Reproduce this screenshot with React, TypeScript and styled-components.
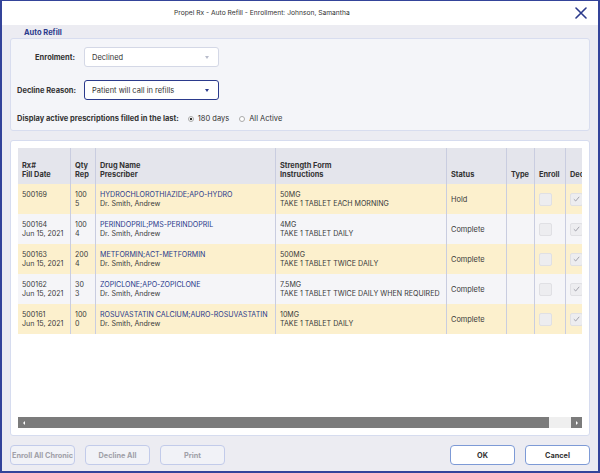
import React from "react";
import styled, { createGlobalStyle } from "styled-components";

const Global = createGlobalStyle`
  html, body { margin: 0; padding: 0; background: #ffffff; }
  * { box-sizing: border-box; }
  body { font-family: Inter, "Noto Sans", sans-serif; color: #3a3a3a; }
`;

const Window = styled.div`
  width: 600px;
  height: 473px;
  border: 2px solid #34449a;
  border-top-width: 1px;
  display: flex;
  flex-direction: column;
  background: #ececf2;
`;

const TitleBar = styled.div`
  height: 24px;
  flex: none;
  background: #ffffff;
  display: flex;
  align-items: center;
  padding-left: 172px;
  font-size: 6.7px;
  color: #333;
`;

const Title = styled.div`
  flex: 1;
`;

const Close = styled.div`
  margin-right: 11px;
  display: flex;
`;

const Body = styled.div`
  flex: 1;
  display: flex;
  flex-direction: column;
  padding: 4px 8px 5px 8px;
`;

const Legend = styled.div`
  font-size: 7.5px;
  font-weight: 700;
  color: #2b3a8c;
  padding-left: 14px;
  height: 8px;
  line-height: 8px;
`;

const Fieldset = styled.div`
  margin-top: 1px;
  border: 1px solid #d8ddef;
  border-radius: 3px;
  background: #f4f5f9;
  padding: 8px 6px 8px 6px;
  display: flex;
  flex-direction: column;
  gap: 13px;
  height: 93px;
`;

const FieldRow = styled.div`
  display: grid;
  grid-template-columns: 58px 135px;
  column-gap: 9px;
  align-items: center;
`;

const Label = styled.div`
  font-size: 7.5px;
  font-weight: 700;
  color: #333;
  text-align: right;
  white-space: nowrap;
`;

const Select = styled.div<{ $active?: boolean }>`
  height: 20px;
  border: 1px solid ${(p) => (p.$active ? "#2b3a8c" : "#d4d8e6")};
  border-radius: 3px;
  background: #ffffff;
  display: flex;
  align-items: center;
  justify-content: space-between;
  padding: 0 9px 0 7px;
  font-size: 7.5px;
  color: #333;
`;

const Caret = styled.span<{ $active?: boolean }>`
  width: 0;
  height: 0;
  border-left: 2.5px solid transparent;
  border-right: 2.5px solid transparent;
  border-top: 3px solid ${(p) => (p.$active ? "#2b3a8c" : "#b8bccb")};
`;

const RadioRow = styled.div`
  display: flex;
  align-items: center;
  font-size: 7.5px;
  color: #333;
  margin-top: 1px;
`;

const RadioLabel = styled.span`
  font-weight: 700;
  margin-right: 9px;
`;

const RadioItem = styled.span`
  display: inline-flex;
  align-items: center;
  gap: 4px;
  margin-right: 10px;
`;

const RadioDot = styled.span<{ $on?: boolean }>`
  width: 6px;
  height: 6px;
  border-radius: 50%;
  border: 1px solid #aaa;
  background: ${(p) => (p.$on ? "radial-gradient(circle, #333 0 1.3px, #fff 1.6px)" : "#fff")};
`;

const TablePanel = styled.div`
  margin-top: 9px;
  height: 296px;
  border: 1px solid #d6dcef;
  border-radius: 3px;
  background: #ffffff;
  padding: 7px 7px 4px 7px;
  display: flex;
  flex-direction: column;
`;

const TableClip = styled.div`
  flex: 1;
  overflow: hidden;
`;

const Table = styled.div`
  width: 600px;
`;

const cols = "52px 25px 180px 171px 60px 28px 31px 30px";

const HeadRow = styled.div`
  display: grid;
  grid-template-columns: ${cols};
  height: 36px;
  background: #e4e5ec;
`;

const HeadCell = styled.div`
  display: flex;
  flex-direction: column;
  justify-content: flex-end;
  padding: 0 4px 5px 4px;
  font-size: 7.4px;
  font-weight: 700;
  line-height: 9px;
  color: #333;
  border-left: 1px solid #c9cde0;
  white-space: nowrap;
  overflow: hidden;
  &:first-child { border-left: none; }
`;

const Row = styled.div<{ $alt?: boolean }>`
  display: grid;
  grid-template-columns: ${cols};
  height: 30px;
  background: ${(p) => (p.$alt ? "#f5f5f8" : "#fcf0cd")};
`;

const Cell = styled.div<{ $blue?: boolean }>`
  display: flex;
  flex-direction: column;
  justify-content: flex-start;
  padding: 6px 4px 0 4px;
  font-size: 7.1px;
  line-height: 9px;
  color: ${(p) => (p.$blue ? "#2b3a8c" : "#3a3a3a")};
  border-left: 1px solid #c9cde0;
  white-space: nowrap;
  overflow: hidden;
  &:first-child { border-left: none; }
`;

const Prescriber = styled.span`
  color: #3a3a3a;
`;

const CenterCell = styled(Cell)`
  justify-content: center;
  padding-top: 0;
  font-size: 7.4px;
`;

const Check = styled.span`
  width: 13px;
  height: 13px;
  border: 1px solid #e0e0e4;
  border-radius: 2px;
  background: #ededf0;
  display: flex;
  align-items: center;
  justify-content: center;
`;

const Scrollbar = styled.div`
  height: 11px;
  flex: none;
  display: flex;
  background: #efefef;
  margin-bottom: 3px;
`;

const Thumb = styled.div`
  width: 531px;
  background: #7b7b7b;
  display: flex;
  align-items: center;
  padding-left: 5px;
`;

const Track = styled.div`
  flex: 1;
`;

const ArrowBtn = styled.div`
  width: 11px;
  background: #7b7b7b;
  display: flex;
  align-items: center;
  justify-content: center;
`;

const Tri = styled.span<{ $dir: "l" | "r" }>`
  width: 0;
  height: 0;
  border-top: 2px solid transparent;
  border-bottom: 2px solid transparent;
  ${(p) => (p.$dir === "l" ? "border-right: 2px solid #fff;" : "border-left: 2px solid #fff;")}
`;

const Footer = styled.div`
  margin-top: 9px;
  display: flex;
  gap: 10px;
  align-items: center;
`;

const Spacer = styled.div`
  flex: 1;
`;

const Button = styled.div<{ $primary?: boolean }>`
  width: 65px;
  height: 20px;
  border-radius: 4px;
  border: 1px solid ${(p) => (p.$primary ? "#7d9ad6" : "#c2cbea")};
  background: ${(p) => (p.$primary ? "#ffffff" : "#f1f2f7")};
  color: ${(p) => (p.$primary ? "#333" : "#a0a0a8")};
  font-size: 7.3px;
  font-weight: 700;
  display: flex;
  align-items: center;
  justify-content: center;
  white-space: nowrap;
  overflow: hidden;
`;

const rows = [
  { rx: "500169", date: "", qty: "100", rep: "5", drug: "HYDROCHLOROTHIAZIDE;APO-HYDRO", str: "50MG", ins: "TAKE 1 TABLET EACH MORNING", status: "Hold" },
  { rx: "500164", date: "Jun 15, 2021", qty: "100", rep: "4", drug: "PERINDOPRIL;PMS-PERINDOPRIL", str: "4MG", ins: "TAKE 1 TABLET DAILY", status: "Complete" },
  { rx: "500163", date: "Jun 15, 2021", qty: "200", rep: "4", drug: "METFORMIN;ACT-METFORMIN", str: "500MG", ins: "TAKE 1 TABLET TWICE DAILY", status: "Complete" },
  { rx: "500162", date: "Jun 15, 2021", qty: "30", rep: "3", drug: "ZOPICLONE;APO-ZOPICLONE", str: "7.5MG", ins: "TAKE 1 TABLET TWICE DAILY WHEN REQUIRED", status: "Complete" },
  { rx: "500161", date: "Jun 15, 2021", qty: "100", rep: "0", drug: "ROSUVASTATIN CALCIUM;AURO-ROSUVASTATIN", str: "10MG", ins: "TAKE 1 TABLET DAILY", status: "Complete" },
];

const Two = ({ a, b }: { a: string; b: string }) => (
  <>
    <span>{a}</span>
    <span>{b || "\u00a0"}</span>
  </>
);

export default function App() {
  return (
    <>
      <Global />
      <Window>
        <TitleBar>
          <Title>Propel Rx - Auto Refill - Enrollment: Johnson, Samantha</Title>
          <Close>
            <svg width="12" height="12" viewBox="0 0 12 12">
              <path d="M1 1 L11 11 M11 1 L1 11" stroke="#2b3a8c" strokeWidth="1.6" strokeLinecap="round" />
            </svg>
          </Close>
        </TitleBar>
        <Body>
          <Legend>Auto Refill</Legend>
          <Fieldset>
            <FieldRow>
              <Label>Enrolment:</Label>
              <Select>
                Declined
                <Caret />
              </Select>
            </FieldRow>
            <FieldRow>
              <Label>Decline Reason:</Label>
              <Select $active>
                Patient will call in refills
                <Caret $active />
              </Select>
            </FieldRow>
            <RadioRow>
              <RadioLabel>Display active prescriptions filled in the last:</RadioLabel>
              <RadioItem>
                <RadioDot $on />
                180 days
              </RadioItem>
              <RadioItem>
                <RadioDot />
                All Active
              </RadioItem>
            </RadioRow>
          </Fieldset>
          <TablePanel>
            <TableClip>
              <Table>
                <HeadRow>
                  <HeadCell><Two a="Rx#" b="Fill Date" /></HeadCell>
                  <HeadCell><Two a="Qty" b="Rep" /></HeadCell>
                  <HeadCell><Two a="Drug Name" b="Prescriber" /></HeadCell>
                  <HeadCell><Two a="Strength Form" b="Instructions" /></HeadCell>
                  <HeadCell>Status</HeadCell>
                  <HeadCell>Type</HeadCell>
                  <HeadCell>Enroll</HeadCell>
                  <HeadCell>Decline</HeadCell>
                </HeadRow>
                {rows.map((r, i) => (
                  <Row key={r.rx} $alt={i % 2 === 1}>
                    <Cell><Two a={r.rx} b={r.date} /></Cell>
                    <Cell><Two a={r.qty} b={r.rep} /></Cell>
                    <Cell $blue>
                      <span>{r.drug}</span>
                      <Prescriber>Dr. Smith, Andrew</Prescriber>
                    </Cell>
                    <Cell><Two a={r.str} b={r.ins} /></Cell>
                    <CenterCell>{r.status}</CenterCell>
                    <Cell />
                    <CenterCell><Check /></CenterCell>
                    <CenterCell>
                      <Check>
                        <svg width="7" height="6" viewBox="0 0 7 6">
                          <path d="M0.8 3.2 L2.7 5 L6.2 0.8" stroke="#9a9aa4" strokeWidth="0.9" fill="none" />
                        </svg>
                      </Check>
                    </CenterCell>
                  </Row>
                ))}
              </Table>
            </TableClip>
            <Scrollbar>
              <Thumb><Tri $dir="l" /></Thumb>
              <Track />
              <ArrowBtn><Tri $dir="r" /></ArrowBtn>
            </Scrollbar>
          </TablePanel>
          <Footer>
            <Button>Enroll All Chronic</Button>
            <Button>Decline All</Button>
            <Button>Print</Button>
            <Spacer />
            <Button $primary>OK</Button>
            <Button $primary>Cancel</Button>
          </Footer>
        </Body>
      </Window>
    </>
  );
}
